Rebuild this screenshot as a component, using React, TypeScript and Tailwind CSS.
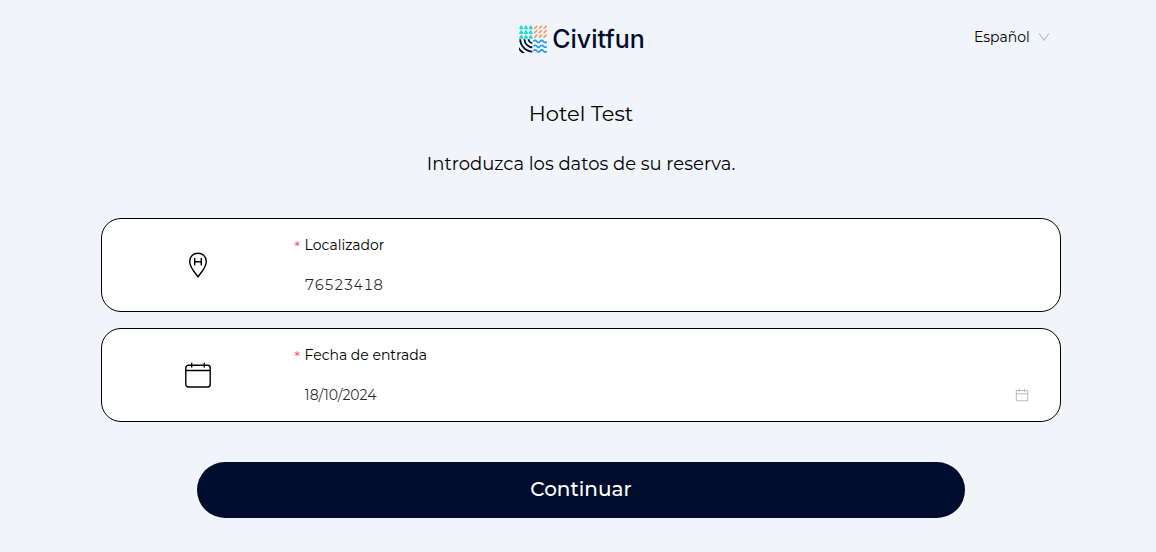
import React, { useState } from 'react';

const LogoMark: React.FC = () => (
    <svg className="w-7 h-7" viewBox="0 0 28 28" fill="none" aria-hidden="true">
        {/* trees */}
        {[2.2, 7, 11.8].map((x) => (
            <g key={x} fill="#1fdcc8">
                {[0, 4.7, 9.4].map((y) => (
                    <path key={y} d={`M${x} ${y}Q${x + 1.9} ${y + 2} ${x + 2} ${y + 4.3}H${x - 2}Q${x - 1.9} ${y + 2} ${x} ${y}Z`} />
                ))}
            </g>
        ))}
        {/* grain */}
        <g stroke="#f99d72" strokeWidth="1.8" strokeLinecap="round">
            {[15.8, 20.5, 25.2].map((x) =>
                [3.2, 7.6, 12].map((y) => <path key={`${x}-${y}`} d={`M${x} ${y}l1.9 -1.9`} />)
            )}
        </g>
        {/* field */}
        <clipPath id="field">
            <rect x="0" y="14.3" width="13.3" height="13.7" />
        </clipPath>
        <g stroke="#000d2e" strokeWidth="1.8" clipPath="url(#field)">
            {[4.2, 8.4, 12.6, 16.8].map((r) => (
                <circle key={r} cx="13.8" cy="14" r={r} />
            ))}
        </g>
        {/* sea */}
        <g stroke="#1b9cf2" strokeWidth="1.6">
            {[16.5, 21.3, 26].map((y) => (
                <path key={y} d={`M14.5 ${y}q1.6 -2.2 3.3 0t3.3 0t3.3 0t3.3 0`} />
            ))}
        </g>
    </svg>
);

const PinIcon: React.FC = () => (
    <svg className="w-5 h-[26px]" viewBox="0 0 20 26" fill="none" stroke="#000" strokeWidth="1.4" aria-hidden="true">
        <path d="M10 24.8C8.2 21.8 1.7 16 1.7 9.4C1.7 4.4 5.3 1.2 10 1.2S18.3 4.4 18.3 9.4C18.3 16 11.8 21.8 10 24.8Z" strokeLinejoin="round" />
        <path d="M6.7 5.9V13.6M13.3 5.9V13.6M6.7 9.7H13.3" />
    </svg>
);

const CalendarIcon: React.FC = () => (
    <svg className="w-[26px] h-[26px]" viewBox="0 0 26 26" fill="none" stroke="#000" strokeWidth="1.4" aria-hidden="true">
        <rect x="0.8" y="3.2" width="24.4" height="21.8" rx="2.5" />
        <path d="M1 8.5H25M6.7 0.8V5.5M19.3 0.8V5.5" />
    </svg>
);

const PickerIcon: React.FC = () => (
    <svg className="w-3.5 h-3.5" viewBox="64 64 896 896" fill="currentColor" aria-hidden="true">
        <path d="M880 184H712v-64c0-4.400-3.600-8-8-8h-56c-4.400 0-8 3.600-8 8v64H384v-64c0-4.400-3.600-8-8-8h-56c-4.400 0-8 3.600-8 8v64H144c-17.700 0-32 14.300-32 32v664c0 17.700 14.300 32 32 32h736c17.700 0 32-14.300 32-32V216c0-17.700-14.300-32-32-32zm-40 656H184V460h656v380zM184 392V256h128v48c0 4.400 3.600 8 8 8h56c4.400 0 8-3.600 8-8v-48h256v48c0 4.400 3.600 8 8 8h56c4.400 0 8-3.600 8-8v-48h128v136H184z" />
    </svg>
);

interface FieldCardProps {
    id: string;
    label: string;
    icon: React.ReactNode;
    children: React.ReactNode;
}

const FieldCard: React.FC<FieldCardProps> = ({ id, label, icon, children }) => (
    <div className="flex items-center bg-white border border-black rounded-[20px]">
        <div className="w-1/5 flex justify-center">{icon}</div>
        <div className="flex-1 pt-2.5 pb-1.5 pr-5">
            <label htmlFor={id} className="flex items-center h-8 text-sm text-black">
                <span className="w-[11px] pl-px pt-1 text-[#ff4d4f]" aria-hidden="true">*</span>
                {label}
            </label>
            <div className="flex items-center h-10 mt-1 px-[11px]">{children}</div>
        </div>
    </div>
);

export default function App() {
    const [locator, setLocator] = useState('76523418');
    const [date, setDate] = useState('18/10/2024');
    const [language, setLanguage] = useState('es');

    return (
        <div className="min-h-screen bg-[#f1f4f9] pl-1.5 text-black font-[450] font-['Montserrat','Inter',sans-serif]">
            <div className="w-full max-w-[960px] mx-auto">
                <header className="grid grid-cols-[1fr_auto_1fr] items-center h-20 pb-0.5">
                    <a href="#" className="col-start-2 flex items-center gap-[5px] pl-0.5 text-[#000d2e]">
                        <LogoMark />
                        <span className="text-[25px] leading-8 font-medium font-['Inter',sans-serif]">Civitfun</span>
                    </a>
                    <div className="flex items-center justify-self-end pr-[11px] pb-1">
                        <select
                            aria-label="Idioma"
                            value={language}
                            onChange={(e) => setLanguage(e.target.value)}
                            className="appearance-none w-16 bg-transparent text-sm outline-none"
                        >
                            <option value="es">Español</option>
                            <option value="en">English</option>
                        </select>
                        <svg className="w-3 h-3 text-[#bfbfbf]" viewBox="0 0 12 12" fill="none" stroke="currentColor" strokeWidth="1.2" aria-hidden="true">
                            <path d="M1.2 2.7L6 9.3L10.8 2.7" />
                        </svg>
                    </div>
                </header>

                <main>
                    <h1 className="mt-[18px] text-center text-[21px] leading-8 font-[450]">Hotel Test</h1>
                    <h2 className="mt-[18px] text-center text-lg leading-8 font-[450]">Introduzca los datos de su reserva.</h2>

                    <form onSubmit={(e) => e.preventDefault()} className="mt-[38px]">
                        <div className="flex flex-col gap-4">
                            <FieldCard id="locator" label="Localizador" icon={<PinIcon />}>
                                <input
                                    id="locator"
                                    type="text"
                                    required
                                    value={locator}
                                    onChange={(e) => setLocator(e.target.value)}
                                    className="w-full bg-transparent text-sm tabular-nums text-black/85 outline-none"
                                />
                            </FieldCard>
                            <FieldCard id="arrival" label="Fecha de entrada" icon={<CalendarIcon />}>
                                <input
                                    id="arrival"
                                    type="text"
                                    required
                                    value={date}
                                    onChange={(e) => setDate(e.target.value)}
                                    className="flex-1 bg-transparent text-sm text-black/85 outline-none"
                                />
                                <span className="text-[#bfbfbf]"><PickerIcon /></span>
                            </FieldCard>
                        </div>
                        <button
                            type="submit"
                            className="block w-4/5 h-14 mx-auto mt-10 pb-0.5 rounded-full bg-[#000d2e] text-white text-xl font-medium"
                        >
                            Continuar
                        </button>
                    </form>
                </main>
            </div>
        </div>
    );
}
